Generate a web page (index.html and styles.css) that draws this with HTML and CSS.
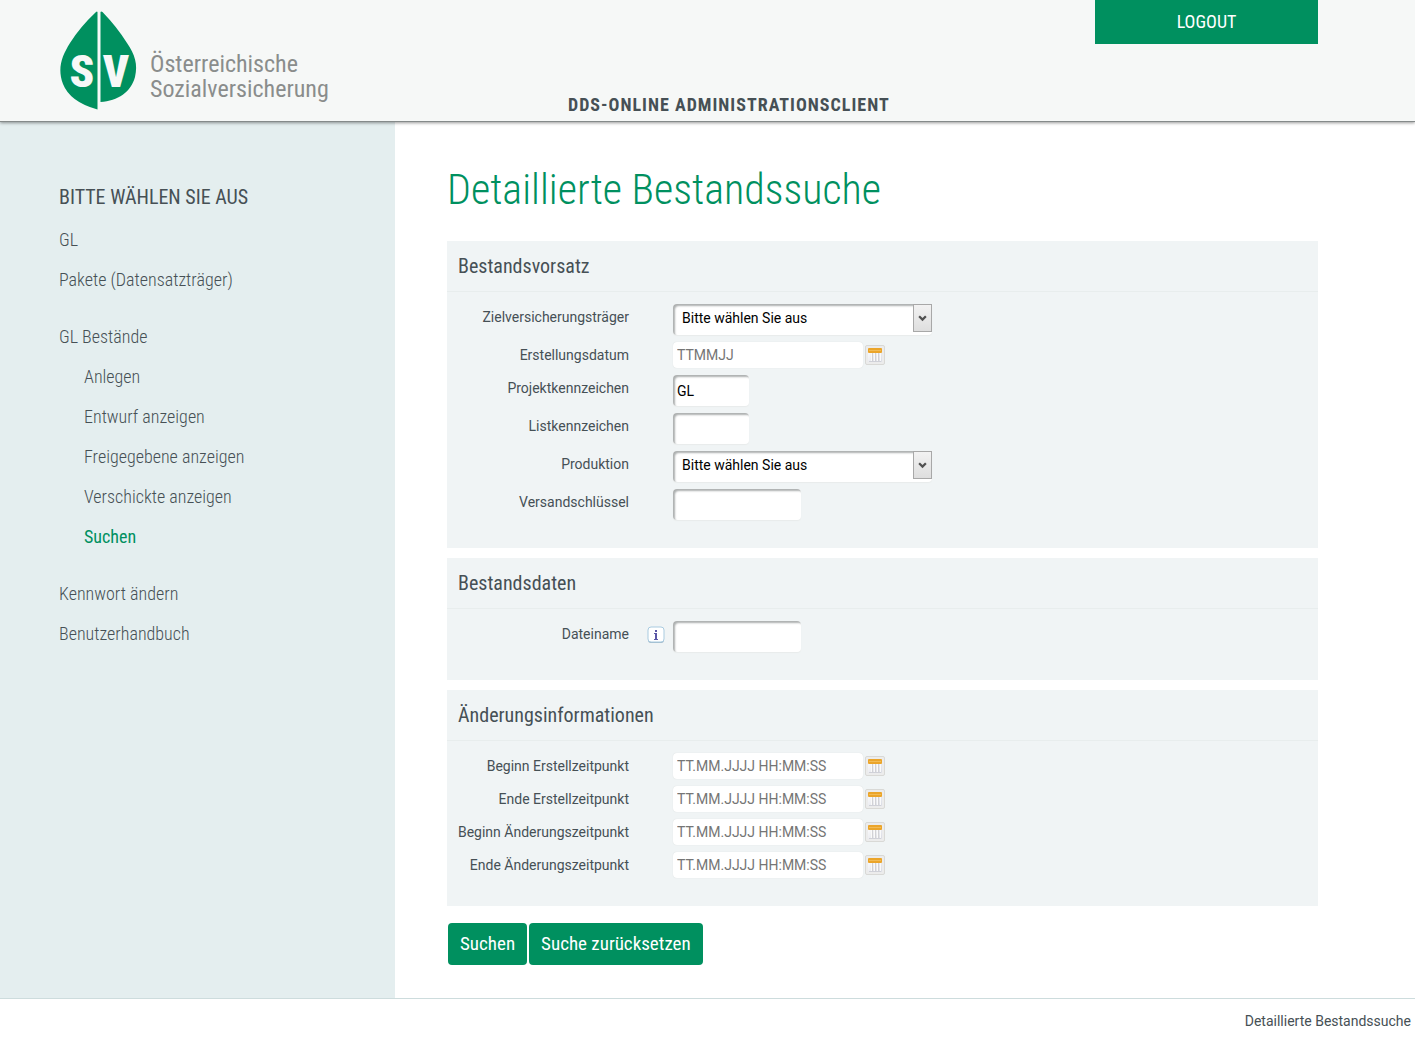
FILE: index.html
```html
<!DOCTYPE html>
<html lang="de">
<head>
<meta charset="utf-8">
<meta name="viewport" content="width=device-width, initial-scale=1">
<title>Detaillierte Bestandssuche</title>
<link rel="stylesheet" href="styles.css">
</head>
<body>
<svg class="sprite" aria-hidden="true">
  <defs>
    <linearGradient id="cal-bg" x1="0" y1="0" x2="1" y2="1">
      <stop offset="0" stop-color="#ffffff"/><stop offset="1" stop-color="#d9dbe4"/>
    </linearGradient>
  </defs>
  <symbol id="calendar" viewBox="0 0 16 16">
    <rect x="1" y="2" width="14" height="13" rx="1" fill="url(#cal-bg)"/>
    <path d="M4.500 6v8M7.500 6v8M10.500 6v8M13.500 6v8" stroke="#fafafa"/>
    <path d="M5.500 6v8M8.500 6v8M11.500 6v8" stroke="#d2d2d5"/>
    <path d="M2 14.500h12" stroke="#d0d1d8"/>
    <rect x="1" y="1" width="14" height="5" rx="1" fill="#eba52a"/>
    <path d="M2 3.500h12" stroke="#f2bb55"/>
  </symbol>
  <symbol id="chevron" viewBox="0 0 8 8">
    <path d="M1 2l3 3 3-3" fill="none" stroke="#505050" stroke-width="2"/>
  </symbol>
</svg>

<header class="header">
  <a class="logo" href="#">
    <svg class="leaf" viewBox="0 0 78 100" aria-hidden="true">
      <path fill="#00905f" d="M36 2Q37 1 37.500 2V99.500Q10 92 3 74C-3 58 2 46 10 33Q20 17 36 2Z"/>
      <path fill="#00905f" d="M40.500 2Q41 1 42.500 2Q57 17 67 33C75 45 78 54 75 67C71 82 58 91 40.500 92Z"/>
      <text class="leaf-letter" x="22" y="77" text-anchor="middle">S</text>
      <text class="leaf-letter" x="56" y="77" text-anchor="middle">V</text>
    </svg>
    <span class="logo-text">Österreichische<br>Sozialversicherung</span>
  </a>
  <p class="app-name">DDS-Online Administrationsclient</p>
  <button class="logout" type="button">LOGOUT</button>
</header>

<div class="body">
  <nav class="sidebar" aria-label="Hauptmenü">
    <h2 class="nav-title">Bitte wählen Sie aus</h2>
    <ul class="nav-group">
      <li><a href="#">GL</a></li>
      <li><a href="#">Pakete (Datensatzträger)</a></li>
    </ul>
    <ul class="nav-group">
      <li><a href="#">GL Bestände</a>
        <ul class="nav-sub">
          <li><a href="#">Anlegen</a></li>
          <li><a href="#">Entwurf anzeigen</a></li>
          <li><a href="#">Freigegebene anzeigen</a></li>
          <li><a href="#">Verschickte anzeigen</a></li>
          <li><a class="active" href="#" aria-current="page">Suchen</a></li>
        </ul>
      </li>
    </ul>
    <ul class="nav-group">
      <li><a href="#">Kennwort ändern</a></li>
      <li><a href="#">Benutzerhandbuch</a></li>
    </ul>
  </nav>

  <main class="main">
    <h1 class="page-title">Detaillierte Bestandssuche</h1>
    <form class="form">
      <section class="card">
        <h2 class="card-title">Bestandsvorsatz</h2>
        <div class="rows">
          <div class="row"><label for="ziel">Zielversicherungsträger</label>
            <div class="select"><select id="ziel"><option>Bitte wählen Sie aus</option></select><span class="arrow"><svg><use href="#chevron"/></svg></span></div></div>
          <div class="row"><label for="datum">Erstellungsdatum</label>
            <div class="date"><input id="datum" type="text" placeholder="TTMMJJ"><button type="button" class="cal" aria-label="Kalender"><svg><use href="#calendar"/></svg></button></div></div>
          <div class="row"><label for="projekt">Projektkennzeichen</label><input class="text short" id="projekt" type="text" value="GL"></div>
          <div class="row"><label for="liste">Listkennzeichen</label><input class="text short" id="liste" type="text"></div>
          <div class="row"><label for="produktion">Produktion</label>
            <div class="select"><select id="produktion"><option>Bitte wählen Sie aus</option></select><span class="arrow"><svg><use href="#chevron"/></svg></span></div></div>
          <div class="row"><label for="versand">Versandschlüssel</label><input class="text" id="versand" type="text"></div>
        </div>
      </section>

      <section class="card">
        <h2 class="card-title">Bestandsdaten</h2>
        <div class="rows">
          <div class="row"><label for="datei">Dateiname</label>
            <svg class="info" viewBox="0 0 18 18" role="img" aria-label="Information"><rect x="1" y="2" width="16" height="15" rx="3" fill="#9fb6c6"/><rect x="1" y="1" width="16" height="15" rx="3" fill="#fff" stroke="#a9cbe0"/><path d="M8 4h2v2H8zM7 7h3v6h1v1H7v-1h1V8H7z" fill="#5b57a6"/></svg>
            <input class="text" id="datei" type="text"></div>
        </div>
      </section>

      <section class="card">
        <h2 class="card-title">Änderungsinformationen</h2>
        <div class="rows">
          <div class="row"><label for="be">Beginn Erstellzeitpunkt</label>
            <div class="date"><input id="be" type="text" placeholder="TT.MM.JJJJ HH:MM:SS"><button type="button" class="cal" aria-label="Kalender"><svg><use href="#calendar"/></svg></button></div></div>
          <div class="row"><label for="ee">Ende Erstellzeitpunkt</label>
            <div class="date"><input id="ee" type="text" placeholder="TT.MM.JJJJ HH:MM:SS"><button type="button" class="cal" aria-label="Kalender"><svg><use href="#calendar"/></svg></button></div></div>
          <div class="row"><label for="ba">Beginn Änderungszeitpunkt</label>
            <div class="date"><input id="ba" type="text" placeholder="TT.MM.JJJJ HH:MM:SS"><button type="button" class="cal" aria-label="Kalender"><svg><use href="#calendar"/></svg></button></div></div>
          <div class="row"><label for="ea">Ende Änderungszeitpunkt</label>
            <div class="date"><input id="ea" type="text" placeholder="TT.MM.JJJJ HH:MM:SS"><button type="button" class="cal" aria-label="Kalender"><svg><use href="#calendar"/></svg></button></div></div>
        </div>
      </section>

      <div class="actions">
        <button class="btn" type="submit">Suchen</button>
        <button class="btn" type="reset">Suche zurücksetzen</button>
      </div>
    </form>
  </main>
</div>

<footer class="footer">Detaillierte Bestandssuche</footer>
</body>
</html>
```
FILE: styles.css
```css
:root {
  --green: #00905f;
  --ink: #465055;
  --condensed: "Roboto Condensed", Roboto, "Liberation Sans", sans-serif;
}
* { box-sizing: border-box; }
body {
  margin: 0;
  min-height: 100vh;
  display: flex;
  flex-direction: column;
  background: #fff;
  color: var(--ink);
  font: 14px/20px Roboto, "Liberation Sans", sans-serif;
}
h1, h2, p, ul { margin: 0; padding: 0; }
ul { list-style: none; }
a { color: inherit; text-decoration: none; }
input, select, button { font: inherit; margin: 0; }
.sprite { position: absolute; width: 0; height: 0; }

.header {
  display: grid;
  grid-template-columns: 508px 1fr auto;
  align-items: start;
  padding: 0 97px 0 60px;
  min-height: 122px;
  background: #f6f8f7;
  border-bottom: 1px solid #858a8a;
  box-shadow: 0 1px 3px rgba(0, 0, 0, .4);
  z-index: 1;
}
.logo { display: flex; gap: 12px; padding-top: 10px; }
.leaf { width: 78px; height: 100px; }
.leaf-letter { font: 900 45px var(--condensed); fill: #f6f8f7; }
.logo-text {
  padding-top: 42px;
  color: #8a8d8c;
  font: 24px/25px var(--condensed);
}
.app-name {
  align-self: end;
  padding-bottom: 5px;
  font: 700 18px/22px var(--condensed);
  letter-spacing: 1px;
  text-transform: uppercase;
}
.logout {
  justify-self: end;
  width: 223px;
  height: 44px;
  border: 0;
  background: var(--green);
  color: #fff;
  font: 18px/24px var(--condensed);
}

.body { display: flex; flex: 1; }
.sidebar {
  flex: 0 0 395px;
  padding: 63px 24px 24px 59px;
  background: #e4eeef;
  font: 300 18px/40px var(--condensed);
}
.nav-title {
  padding-bottom: 10px;
  font: 20px/25px var(--condensed);
  text-transform: uppercase;
}
.nav-group + .nav-group { margin-top: 17px; }
.nav-sub { padding-left: 25px; }
.active { color: var(--green); font-weight: 400; }

.main { flex: 1; padding: 43px 97px 33px 52px; }
.page-title {
  padding-bottom: 26px;
  color: var(--green);
  font: 300 42px/50px var(--condensed);
}
.form { display: grid; gap: 10px; }
.card { background: #f0f4f5; }
.card-title {
  padding: 0 11px;
  border-bottom: 1px solid #e8eded;
  font: 20px/50px var(--condensed);
}
.rows { display: grid; gap: 7px; padding: 12px 10px 28px; }
.row {
  display: grid;
  grid-template-columns: 172px 18px 1fr;
  column-gap: 18px;
  align-items: start;
}
.row label { line-height: 26px; text-align: right; white-space: nowrap; }
.row > :last-child { grid-column: 3; margin-left: -10px; }
.info { width: 18px; height: 18px; margin-top: 5px; }

.text, .select select {
  height: 31px;
  border: 0;
  border-radius: 4px;
  background: #fff;
  box-shadow: inset 2px 2px 2px #adb0b0, 0 1px 1px #e8ebeb;
  color: #000;
}
.text { width: 128px; padding: 0 4px; }
.text.short { width: 76px; }
.select { position: relative; width: 259px; height: 31px; }
.select select { width: 100%; padding: 0 30px 3px 9px; appearance: none; }
.arrow {
  position: absolute;
  top: 0;
  right: 0;
  display: grid;
  place-items: center;
  width: 19px;
  height: 28px;
  border: 1px solid #a8a8a8;
  background: linear-gradient(#f2f2f2, #dedede);
  pointer-events: none;
}
.arrow svg { width: 9px; height: 9px; }
.date { display: flex; align-items: center; gap: 2px; }
.date input {
  width: 190px;
  height: 26px;
  padding: 0 4px;
  border: 0;
  border-radius: 4px;
  background: #fff;
  box-shadow: 0 0 1px #cfd4d4;
}
.date input::placeholder { color: #757575; opacity: 1; }
.cal {
  display: grid;
  place-items: center;
  width: 20px;
  height: 20px;
  padding: 0;
  border: 1px solid #d9d9d6;
  border-radius: 2px;
  background: #ececec;
}
.cal svg { width: 16px; height: 16px; }

.actions { display: flex; gap: 2px; padding: 7px 1px 0; }
.btn {
  height: 42px;
  padding: 0 12px;
  border: 0;
  border-radius: 4px;
  background: var(--green);
  color: #fff;
  font: 19px/24px var(--condensed);
}
.footer {
  padding: 12px 4px 7px;
  border-top: 1px solid #cddcdd;
  text-align: right;
}
```
